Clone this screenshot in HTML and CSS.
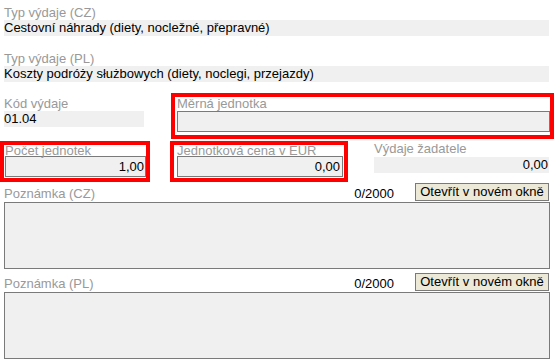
FILE: index.html
```html
<!DOCTYPE html>
<html lang="cs">

<head>
    <meta charset="UTF-8">
    <meta name="viewport" content="width=device-width, initial-scale=1.0">
    <title>Výdaj</title>
    <link rel="stylesheet" href="styles.css">
</head>

<body>
    <div class="formular">
        <!-- typ vydaje, dva jazyky -->
        <div class="siroke">
            <div class="popis">Typ výdaje (CZ)</div>
            <div class="hodnota">Cestovní náhrady (diety, nocležné, přepravné)</div>
        </div>
        <div class="siroke">
            <div class="popis">Typ výdaje (PL)</div>
            <div class="hodnota">Koszty podróży służbowych (diety, noclegi, przejazdy)</div>
        </div>

        <div class="radek radek-kod">
            <div class="kod">
                <div class="popis">Kód výdaje</div>
                <div class="hodnota">01.04</div>
            </div>
            <div class="ramecek merna">
                <div class="popis">Měrná jednotka</div>
                <input class="vstup" type="text" value="" readonly>
            </div>
        </div>

        <div class="radek radek-cisla">
            <div class="ramecek pocet">
                <div class="popis">Počet jednotek</div>
                <input class="vstup cislo" type="text" value="1,00" readonly>
            </div>
            <div class="ramecek cena">
                <div class="popis">Jednotková cena v EUR</div>
                <input class="vstup cislo" type="text" value="0,00" readonly>
            </div>
            <div class="vydaje">
                <div class="popis">Výdaje žadatele</div>
                <div class="hodnota cislo">0,00</div>
            </div>
        </div>

        <div class="poznamka">
            <div class="hlavicka">
                <span class="popis">Poznámka (CZ)</span>
                <span class="pocitadlo">0/2000</span>
                <button class="tlacitko">Otevřít v novém okně</button>
            </div>
            <textarea class="text" readonly></textarea>
        </div>

        <div class="poznamka">
            <div class="hlavicka">
                <span class="popis">Poznámka (PL)</span>
                <span class="pocitadlo">0/2000</span>
                <button class="tlacitko">Otevřít v novém okně</button>
            </div>
            <textarea class="text" readonly></textarea>
        </div>
    </div>
</body>

</html>
```

FILE: styles.css
```css
* {
    margin: 0;
    padding: 0;
    box-sizing: border-box;
}

body {
    font-family: "Liberation Sans", Arial, sans-serif;
    font-size: 13px;
    color: #000;
    background-color: #fff;
}

.formular {
    padding: 5px 0 0 4px;
}

.popis {
    color: #999;
    line-height: 15px;
    white-space: nowrap;
}

.hodnota {
    background-color: #f0f0f0;
    height: 16px;
    line-height: 16px;
    white-space: nowrap;
}

.cislo {
    text-align: right;
}

.siroke {
    width: 545px;
}

.siroke + .siroke {
    margin-top: 15px;
}

.radek {
    display: flex;
    align-items: flex-start;
}

.radek-kod {
    margin-top: 11px;
}

.radek-cisla {
    margin-top: 2px;
}

.kod {
    width: 140px;
    padding-top: 3px;
    flex-shrink: 0;
}

/* cervene oramovani kolem poli */
.ramecek {
    border: 4px solid #f00;
    flex-shrink: 0;
}

.vstup {
    display: block;
    height: 21px;
    background-color: #f0f0f0;
    border: 1px solid #7a7a7a;
    font: inherit;
    color: #000;
    padding: 0 1px;
    outline: none;
}

.merna {
    margin-left: 27px;
    width: 383px;
    padding-bottom: 3px;
}

.merna .popis {
    line-height: 14px;
    padding-left: 2px;
}

.merna .vstup {
    margin-left: 2px;
    width: 373px;
}

.pocet {
    margin-left: -4px;
    width: 150px;
    padding-bottom: 1px;
}

/* popisek je natesno pod ramem */
.pocet .popis,
.cena .popis {
    line-height: 10px;
    padding-top: 1px;
}

.pocet .popis {
    padding-left: 1px;
}

.pocet .vstup {
    margin-left: 1px;
    width: 141px;
}

.cena {
    margin-left: 20px;
    width: 178px;
    padding-bottom: 1px;
}

.cena .popis {
    padding-left: 3px;
}

.cena .vstup {
    margin-left: 3px;
    width: 166px;
    padding-right: 2px;
}

.vydaje {
    margin-left: 26px;
    width: 175px;
    flex-shrink: 0;
}

.vydaje .popis {
    line-height: 16px;
}

.vydaje .hodnota {
    padding-right: 1px;
}

.poznamka {
    margin-top: 1px;
}

.poznamka + .poznamka {
    margin-top: 4px;
}

.hlavicka {
    display: flex;
    align-items: flex-end;
    width: 546px;
    height: 19px;
}

.hlavicka .popis {
    flex: 1;
    line-height: 16px;
}

.pocitadlo {
    line-height: 16px;
    margin-right: 21px;
}

.tlacitko {
    align-self: flex-start;
    width: 134px;
    height: 18px;
    margin-right: 1px;
    background-color: #ece9d8;
    border: 1px solid #7a7a7a;
    font: inherit;
    color: #000;
    line-height: 16px;
}

.text {
    display: block;
    width: 546px;
    height: 67px;
    background-color: #f0f0f0;
    border: 1px solid #7a7a7a;
    resize: none;
    outline: none;
}
```
